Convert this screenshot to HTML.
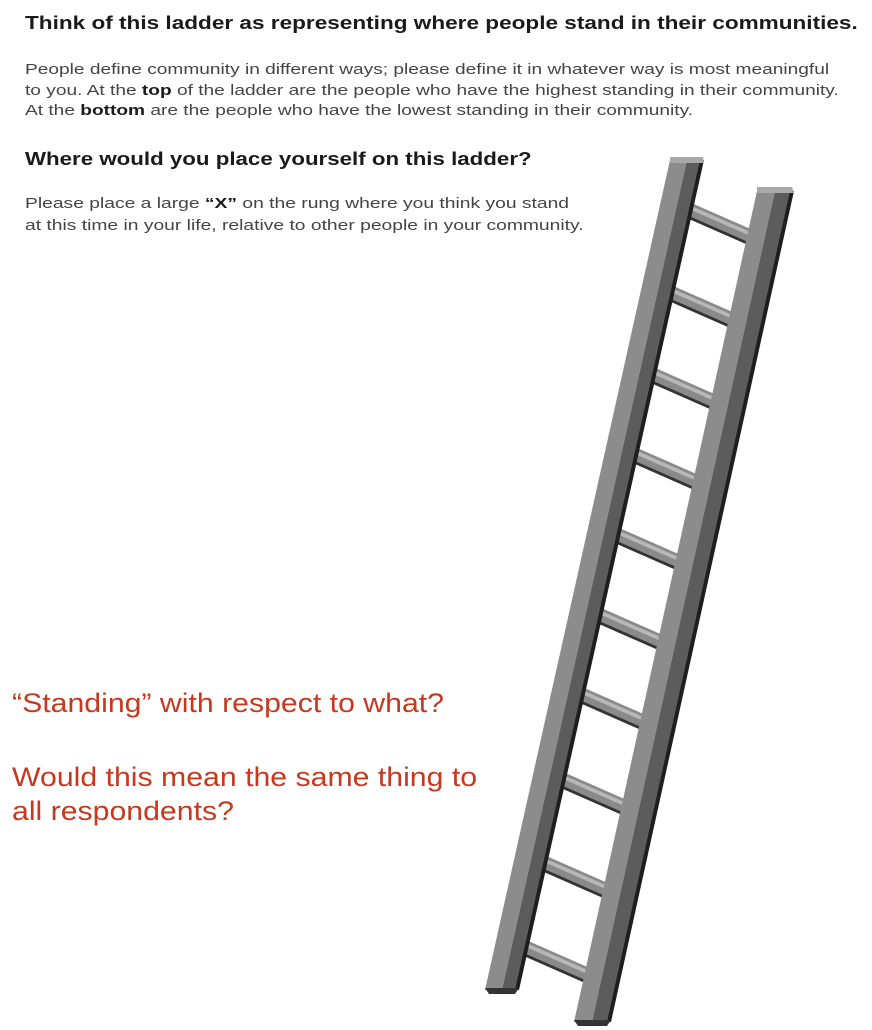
<!DOCTYPE html>
<html><head><meta charset="utf-8"><style>
body{margin:0;width:872px;height:1030px;background:#fff;position:relative;overflow:hidden;font-family:"Liberation Sans",Arial,sans-serif}
h1,h2,.p,.r{transform-origin:0 0}
h1{position:absolute;left:25px;top:12px;margin:0;font-size:18.5px;font-weight:bold;color:#1a1a1a;white-space:nowrap;transform:scaleX(1.22)}
h2{position:absolute;left:25px;top:148px;margin:0;font-size:18.5px;font-weight:bold;color:#1a1a1a;white-space:nowrap;transform:scaleX(1.205)}
.p{position:absolute;left:25px;font-size:14.6px;line-height:20.5px;color:#444;white-space:nowrap}
.p b{color:#1a1a1a}
.r{position:absolute;left:12px;font-size:27px;color:#c8381f;line-height:34px;white-space:nowrap;transform:scaleX(1.12)}
svg{position:absolute;left:0;top:0}
</style></head><body>
<h1>Think of this ladder as representing where people stand in their communities.</h1>
<div class="p" style="top:60px;transform:scaleX(1.31)">People define community in different ways; please define it in whatever way is most meaningful<br>to you. At the <b>top</b> of the ladder are the people who have the highest standing in their community.<br>At the <b>bottom</b> are the people who have the lowest standing in their community.</div>
<h2>Where would you place yourself on this ladder?</h2>
<div class="p" style="top:193px;line-height:22px;transform:scaleX(1.32)">Please place a large <b>“X”</b> on the rung where you think you stand<br>at this time in your life, relative to other people in your community.</div>
<div class="r" style="top:686px">“Standing” with respect to what?</div>
<div class="r" style="top:760px">Would this mean the same thing to<br>all respondents?</div>
<svg width="872" height="1030">
<defs>
<g id="rg">
<polygon points="0,0 75,33 75,50 0,17" fill="#8a8a8a"/>
<polygon points="0,3 75,36 75,40 0,7" fill="#b8b8b8"/>
<polygon points="0,14 75,47 75,50 0,17" fill="#333"/>
</g>
</defs>
<use href="#rg" x="680" y="198"/>
<use href="#rg" x="662" y="281"/>
<use href="#rg" x="644" y="363"/>
<use href="#rg" x="626" y="443"/>
<use href="#rg" x="608" y="523"/>
<use href="#rg" x="590" y="603"/>
<use href="#rg" x="573" y="683"/>
<use href="#rg" x="554" y="768"/>
<use href="#rg" x="535" y="851"/>
<use href="#rg" x="517" y="936"/>
<g>
<polygon points="670,160 687,160 502,990 485,990" fill="#8c8c8c"/>
<polygon points="687,160 703,160 518,990 502,990" fill="#5c5c5c"/>
<polygon points="700,160 704,160 519,990 515,990" fill="#1e1e1e"/>
<polygon points="670,157 703,157 704,163 670,163" fill="#a8a8a8"/>
<polygon points="485,988 519,988 515,994 489,994" fill="#333"/>
</g>
<g>
<polygon points="757,191 775,191 592,1022 574,1022" fill="#8c8c8c"/>
<polygon points="775,191 793,191 610,1022 592,1022" fill="#5c5c5c"/>
<polygon points="790,191 794,191 611,1022 607,1022" fill="#1e1e1e"/>
<polygon points="757,187 792,187 794,193 757,193" fill="#a8a8a8"/>
<polygon points="574,1020 611,1020 607,1026 578,1026" fill="#333"/>
</g>
</svg>
</body></html>
